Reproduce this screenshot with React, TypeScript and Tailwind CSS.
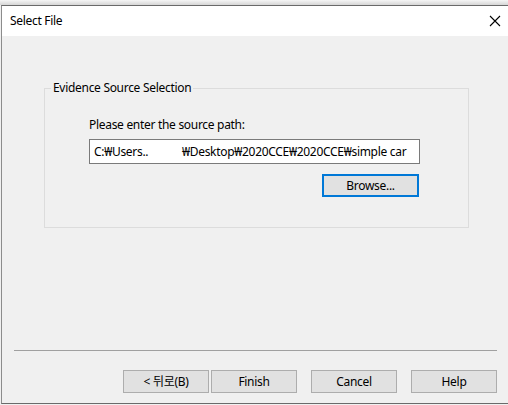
const font = { fontFamily: '"Noto Sans", "Noto Sans CJK KR", sans-serif' };

function DlgButton({ label }: { label: string }) {
  return (
    <button className="w-[86px] h-[23px] bg-[#e1e1e1] border border-[#adadad] text-[12px] leading-none text-black flex items-center justify-center">
      {label}
    </button>
  );
}

export default function App() {
  return (
    <div
      className="w-[508px] h-[405px] bg-[#f0f0f0] flex flex-col overflow-hidden text-black text-[12px] tracking-[-0.3px]"
      style={font}
    >
      {/* shadow strip above the window */}
      <div className="h-[5px] bg-gradient-to-b from-[#f6f6f6] to-[#d6d6d6]" />

      <div className="ml-[1px] h-[399px] flex flex-col border-l border-t border-b border-l-[#8c8c8c] border-t-[#6a6a6a] border-b-[#6a6a6a]">
        {/* Title bar */}
        <div className="h-[30px] bg-white flex items-center justify-between pl-[8px] pr-[7px]">
          <span className="text-[12px]">Select File</span>
          <svg width="12" height="12" viewBox="0 0 12 12" className="text-black">
            <path d="M1 1 L11 11 M11 1 L1 11" stroke="currentColor" strokeWidth="1.1" />
          </svg>
        </div>

        {/* Body */}
        <div className="flex-1 flex flex-col">
          <fieldset className="mt-[44px] ml-[42px] w-[425px] h-[148px] border border-[#dcdcdc]">
            <legend className="ml-[6px] px-[2px] leading-[16px]">Evidence Source Selection</legend>
            <div className="pl-[44px] pt-[21px] flex flex-col">
              <div className="leading-[16px]">Please enter the source path:</div>
              <div className="mt-[6px] w-[331px] h-[25px] bg-white border border-[#7a7a7a] flex items-center pl-[4px] overflow-hidden whitespace-nowrap">
                <span className="inline-block w-[88px] shrink-0">C:₩Users..</span>
                <span className="shrink-0">₩Desktop₩2020CCE₩2020CCE₩simple car</span>
              </div>
              <div className="w-[331px] flex justify-end pr-[1px] mt-[10px]">
                <button className="w-[97px] h-[23px] bg-[#e1e1e1] border-2 border-[#0078d7] flex items-center justify-center leading-none">
                  Browse...
                </button>
              </div>
            </div>
          </fieldset>

          <div className="flex-1" />

          <div className="ml-[12px] mr-[11px] h-px bg-[#a0a0a0]" />

          <div className="mt-[19px] mb-[10px] pr-[11px] flex justify-end">
            <div className="flex gap-[2px]">
              <DlgButton label="< 뒤로(B)" />
              <DlgButton label="Finish" />
            </div>
            <div className="ml-[14px] flex gap-[14px]">
              <DlgButton label="Cancel" />
              <DlgButton label="Help" />
            </div>
          </div>
        </div>
      </div>
    </div>
  );
}
